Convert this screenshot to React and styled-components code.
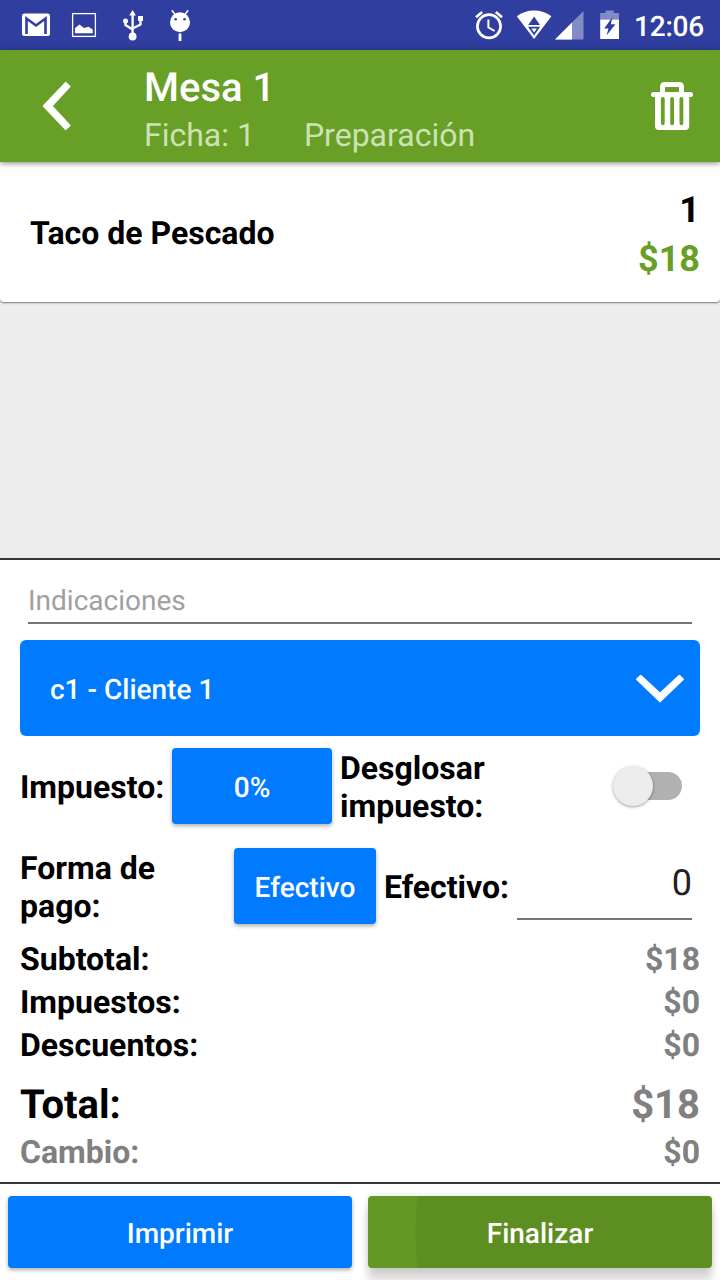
import React, { useState } from "react";
import styled, { createGlobalStyle } from "styled-components";

const GlobalStyle = createGlobalStyle`
  * {
    box-sizing: border-box;
  }

  body {
    margin: 0;
    background: #ffffff;
    font-family: Roboto, "Liberation Sans", sans-serif;
    text-rendering: geometricPrecision;
  }

  p, h1 {
    margin: 0;
  }

  button, input {
    font-family: inherit;
    text-rendering: inherit;
    border: none;
    outline: none;
    padding: 0;
    background: none;
  }
`;

const Screen = styled.div`
  width: 720px;
  height: 1280px;
  display: flex;
  flex-direction: column;
  overflow: hidden;
  background: #ededed;
`;

const StatusBar = styled.div`
  height: 50px;
  flex: none;
  display: flex;
  align-items: center;
  justify-content: space-between;
  background: #303f9f;

  svg {
    display: block;
  }
`;

const Clock = styled.span`
  width: 86px;
  height: 50px;
  font-size: 28px;
  line-height: 53px;
  font-weight: 500;
  letter-spacing: -0.2px;
  color: #ffffff;
`;

const StatusRight = styled.div`
  display: flex;
  align-items: center;
`;

const Header = styled.header`
  height: 112px;
  flex: none;
  display: flex;
  align-items: flex-start;
  background: #689f26;
  box-shadow: 0 1px 6px rgba(0, 0, 0, 0.5);
  z-index: 1;
`;

const IconButton = styled.button`
  width: ${(props) => props.$width}px;
  height: 112px;
  flex: none;

  svg {
    display: block;
  }
`;

const HeaderText = styled.div`
  flex: 1;
  padding-top: 14px;

  h1 {
    font-size: 40px;
    line-height: 48px;
    font-weight: 500;
    color: #ffffff;
  }

  p {
    display: flex;
    gap: 49px;
    font-size: 32px;
    line-height: 46px;
    color: #cde2b2;
  }
`;

const OrderItem = styled.div`
  height: 140px;
  flex: none;
  display: flex;
  align-items: center;
  justify-content: space-between;
  padding: 2px 20px 0 30px;
  border-radius: 0 0 4px 4px;
  background: #ffffff;
  box-shadow: 0 1px 2px rgba(0, 0, 0, 0.5);
`;

const ItemName = styled.p`
  font-size: 32px;
  line-height: 38px;
  font-weight: 700;
  color: #000000;
`;

const ItemAmount = styled.div`
  padding-top: 4px;
  text-align: right;
  font-size: 36px;
  line-height: 49px;
  font-weight: 700;
  color: #000000;

  p:last-child {
    color: #689f26;
  }
`;

const Form = styled.section`
  height: 626px;
  flex: none;
  margin-top: auto;
  padding: 0 20px;
  border-top: 2px solid #37373a;
  border-bottom: 2px solid #37373a;
  background: #ffffff;
`;

const NotesInput = styled.input`
  display: block;
  width: 664px;
  height: 64px;
  margin: 0 8px 16px;
  padding-top: 19px;
  border-bottom: 2px solid #757575;
  font-size: 28px;
  color: #212121;

  &::placeholder {
    color: #a0a0a0;
    opacity: 1;
  }
`;

const ClientSelect = styled.button`
  display: flex;
  align-items: center;
  justify-content: space-between;
  width: 100%;
  height: 96px;
  padding: 2px 16px 0 30px;
  border-radius: 6px;
  font-size: 28px;
  font-weight: 500;
  color: #ffffff;
  background: #007aff;

  svg {
    display: block;
  }
`;

const FieldRow = styled.div`
  display: flex;
  align-items: center;
  height: 76px;
  margin-top: ${(props) => props.$top}px;
`;

const Label = styled.p`
  width: ${(props) => props.$width}px;
  flex: none;
  font-size: 32px;
  line-height: 38px;
  font-weight: 700;
  color: #000000;
  padding-top: 1px;
`;

const Button = styled.button`
  width: ${(props) => (props.$width ? `${props.$width}px` : "auto")};
  height: ${(props) => props.$height || 76}px;
  flex: ${(props) => (props.$width ? "none" : 1)};
  margin-right: ${(props) => props.$gap || 0}px;
  padding-top: 2px;
  border-radius: 4px;
  font-size: 28px;
  font-weight: 500;
  color: #ffffff;
  background: #007aff;
  box-shadow: 0 2px 4px rgba(0, 0, 0, 0.32);
`;

const FinishButton = styled(Button)`
  background: radial-gradient(
    circle 330px at 377px 36px,
    #5d8e22 329px,
    #639824 330px
  );
  box-shadow: 0 12px 8px rgba(0, 0, 0, 0.16), 0 0 6px rgba(0, 0, 0, 0.12);
`;

const Switch = styled.button`
  display: flex;
  align-items: center;
  width: 70px;
  height: 44px;
  margin-left: auto;
  margin-right: 18px;

  &::before {
    content: "";
    width: 40px;
    height: 40px;
    flex: none;
    margin-left: 1px;
    border-radius: 50%;
    background: #ececec;
    box-shadow: 0 1px 3px rgba(0, 0, 0, 0.38);
    z-index: 1;
  }

  &::after {
    content: "";
    width: 50px;
    height: 28px;
    flex: none;
    margin-left: -21px;
    border-radius: 14px;
    background: #b1b1b1;
  }
`;

const CashInput = styled.input`
  width: 175px;
  height: 72px;
  align-self: flex-start;
  padding-bottom: 1px;
  border-bottom: 2px solid #757575;
  font-size: 36px;
  text-align: right;
  color: #212121;
`;

const Totals = styled.div`
  padding-top: 14px;
`;

const TotalRow = styled.div`
  display: flex;
  justify-content: space-between;
  font-size: ${(props) => (props.$large ? 40 : 32)}px;
  line-height: ${(props) => (props.$large ? 52 : 43)}px;
  margin-top: ${(props) => (props.$large ? 12 : 0)}px;
  font-weight: 700;
  color: ${(props) => (props.$muted ? "#808080" : "#000000")};

  span:last-child {
    color: #808080;
  }
`;

const Footer = styled.footer`
  height: 96px;
  flex: none;
  display: flex;
  gap: 16px;
  padding: 12px 8px;
  background: #ffffff;
`;

const NotificationIcons = () => (
  <svg width="200" height="50" viewBox="0 0 200 50" fill="#ffffff">
    <rect x="22" y="13.5" width="28" height="22.5" rx="2.5" />
    <path
      d="M26.5 34V18.5L36 25.5L45.5 18.5V34"
      fill="none"
      stroke="#303f9f"
      strokeWidth="2.6"
    />
    <rect x="72.6" y="13.6" width="22.8" height="22.8" fill="none" stroke="#ffffff" strokeWidth="1.3" />
    <path d="M75 33.3V28L79.5 24.5L84 28L88.5 26.8L92.7 29.5V33.3Z" />
    <path d="M132.6 10L136 15.5H129.2Z" />
    <path
      d="M132.6 14V34M125.5 22V25L132.6 29.5M140.5 19V24.5L132.6 28.5"
      fill="none"
      stroke="#ffffff"
      strokeWidth="2.3"
    />
    <circle cx="125.5" cy="21" r="2.5" />
    <rect x="138" y="16" width="5" height="5" />
    <circle cx="132.6" cy="36.5" r="3.9" />
    <circle cx="180" cy="22.2" r="10" />
    <path
      d="M172.2 10.8L175.5 15M187.8 10.8L184.5 15"
      stroke="#ffffff"
      strokeWidth="1.6"
      strokeLinecap="round"
    />
    <circle cx="175.7" cy="19.3" r="1.3" fill="#303f9f" />
    <circle cx="184.5" cy="19.3" r="1.3" fill="#303f9f" />
    <rect x="178.6" y="33.5" width="2.8" height="7.5" />
  </svg>
);

const SystemIcons = () => (
  <svg width="164" height="50" viewBox="470 0 164 50" fill="#ffffff">
    <circle cx="489" cy="26.3" r="11.6" fill="none" stroke="#ffffff" strokeWidth="2.7" />
    <path
      d="M488.4 19.5V27.4L494.6 31"
      fill="none"
      stroke="#ffffff"
      strokeWidth="2"
    />
    <path d="M476 17.2L482.2 12M495.8 12L502 17.2" stroke="#ffffff" strokeWidth="2.7" />
    <path d="M516.8 16.2C526.5 8.7 541.7 8.7 551.4 16.2L534.1 39Z" />
    <path d="M534.1 16.5L540 25H528.2Z" fill="#303f9f" />
    <path d="M528 26.8H540.2L534.1 35.5Z" fill="#303f9f" />
    <path d="M531.3 28.6H536.9L534.1 32.6Z" />
    <path d="M583.5 11V39.5H555Z" fillOpacity="0.4" />
    <path d="M572 22.5V39.5H555Z" />
    <path d="M605.5 10.5H613.8V13H619V19.5H600.2V13H605.5Z" fillOpacity="0.4" />
    <rect x="600.2" y="19.5" width="18.8" height="19.5" />
    <path d="M612.5 17L604.2 28.5H608.5L606.5 35.5L615.4 24.2H610.8Z" fill="#303f9f" />
  </svg>
);

const BackIcon = () => (
  <svg width="144" height="112" viewBox="0 50 144 112">
    <path
      d="M43.3 106L65.7 82.4L70 86.5L52 106L70 125.5L65.7 129.6Z"
      fill="#ffffff"
      stroke="#ffffff"
      strokeWidth="1.2"
      strokeLinejoin="round"
    />
  </svg>
);

const TrashIcon = () => (
  <svg width="96" height="112" viewBox="624 50 96 112">
    <g fill="none" stroke="#ffffff" strokeWidth="5">
      <path d="M662.5 94V87Q662.5 84.5 665 84.5H679Q681.5 84.5 681.5 87V94" />
      <path d="M653.5 94.5H690.5" strokeLinecap="round" />
    </g>
    <path d="M655 95H689.2V126Q689.2 130 685.2 130H659Q655 130 655 126Z" fill="#ffffff" />
    <path
      d="M662.8 99V123.3M672.1 99V123.3M681.4 99V123.3"
      stroke="#689f26"
      strokeWidth="3.8"
      strokeLinecap="round"
    />
  </svg>
);

const ArrowDownIcon = () => (
  <svg width="48" height="28" viewBox="636 674.8 48 28">
    <path
      d="M636.6 679L640.7 675L660 693L679.3 675L683.4 679L660 701.6Z"
      fill="#ffffff"
      stroke="#ffffff"
      strokeWidth="1.2"
      strokeLinejoin="round"
    />
  </svg>
);

const App = () => {
  const [notes, setNotes] = useState("");
  const [cash, setCash] = useState("0");

  return (
    <Screen>
      <GlobalStyle />
      <StatusBar>
        <NotificationIcons />
        <StatusRight>
          <SystemIcons />
          <Clock>12:06</Clock>
        </StatusRight>
      </StatusBar>

      <Header>
        <IconButton $width={144}>
          <BackIcon />
        </IconButton>
        <HeaderText>
          <h1>Mesa 1</h1>
          <p>
            <span>Ficha: 1</span>
            <span>Preparación</span>
          </p>
        </HeaderText>
        <IconButton $width={96}>
          <TrashIcon />
        </IconButton>
      </Header>

      <OrderItem>
        <ItemName>Taco de Pescado</ItemName>
        <ItemAmount>
          <p>1</p>
          <p>$18</p>
        </ItemAmount>
      </OrderItem>

      <Form>
        <NotesInput
          placeholder="Indicaciones"
          value={notes}
          onChange={(e) => setNotes(e.target.value)}
        />
        <ClientSelect>
          c1 - Cliente 1
          <ArrowDownIcon />
        </ClientSelect>

        <FieldRow $top={12}>
          <Label $width={152}>Impuesto:</Label>
          <Button $width={160} $gap={8}>
            0%
          </Button>
          <Label $width={180}>Desglosar impuesto:</Label>
          <Switch />
        </FieldRow>

        <FieldRow $top={24}>
          <Label $width={214}>
            Forma de
            <br />
            pago:
          </Label>
          <Button $width={142} $gap={8}>
            Efectivo
          </Button>
          <Label $width={133}>Efectivo:</Label>
          <CashInput value={cash} onChange={(e) => setCash(e.target.value)} />
        </FieldRow>

        <Totals>
          <TotalRow>
            <span>Subtotal:</span>
            <span>$18</span>
          </TotalRow>
          <TotalRow>
            <span>Impuestos:</span>
            <span>$0</span>
          </TotalRow>
          <TotalRow>
            <span>Descuentos:</span>
            <span>$0</span>
          </TotalRow>
          <TotalRow $large>
            <span>Total:</span>
            <span>$18</span>
          </TotalRow>
          <TotalRow $muted>
            <span>Cambio:</span>
            <span>$0</span>
          </TotalRow>
        </Totals>
      </Form>

      <Footer>
        <Button $height={72}>Imprimir</Button>
        <FinishButton $height={72}>Finalizar</FinishButton>
      </Footer>
    </Screen>
  );
};

export default App;
